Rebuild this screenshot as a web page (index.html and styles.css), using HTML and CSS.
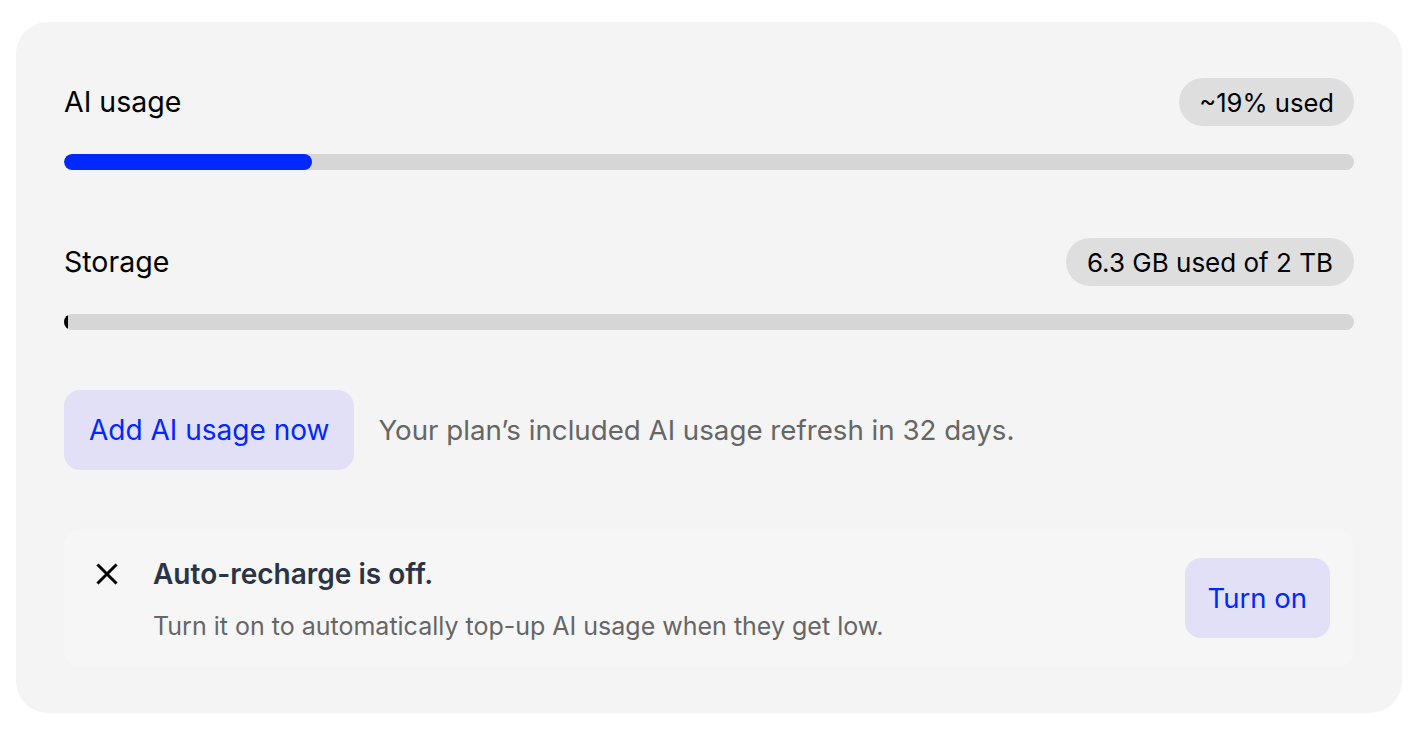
FILE: index.html
```html
<!DOCTYPE html>
<html lang="en">
<head>
<meta charset="utf-8">
<title>Usage</title>
<link rel="stylesheet" href="styles.css">
</head>
<body>
<section class="card">
  <div class="meter">
    <div class="meter-head">
      <span class="meter-label">AI usage</span>
      <span class="pill pill-tight">~19% used</span>
    </div>
    <div class="track"><div class="fill fill-blue" style="width:19.2%"></div></div>
  </div>
  <div class="meter">
    <div class="meter-head">
      <span class="meter-label">Storage</span>
      <span class="pill">6.3 GB used of 2 TB</span>
    </div>
    <div class="track"><div class="fill fill-black" style="width:0.3%"></div></div>
  </div>
  <div class="actions">
    <button class="btn">Add AI usage now</button>
    <span class="note">Your plan’s included AI usage refresh in 32 days.</span>
  </div>
  <div class="recharge">
    <svg class="x-icon" viewBox="0 0 24 24" width="24" height="24" aria-hidden="true">
      <path d="M3.5 3.5 L20.5 20.5 M20.5 3.5 L3.5 20.5" stroke="#000" stroke-width="3" stroke-linecap="square" fill="none"/>
    </svg>
    <div class="recharge-text">
      <div class="recharge-title">Auto-recharge is off.</div>
      <div class="recharge-desc">Turn it on to automatically top-up AI usage when they get low.</div>
    </div>
    <button class="btn btn-small">Turn on</button>
  </div>
</section>
</body>
</html>
```

FILE: styles.css
```css
* { box-sizing: border-box; }

html, body {
  margin: 0;
  background: #ffffff;
}

body {
  padding: 22px 16px;
  font-family: "Inter", "Noto Sans", sans-serif;
  font-size: 26px;
  color: #000;
}

.card {
  background: #f4f4f4;
  border-radius: 32px;
  padding: 56px 48px 47px;
  display: flex;
  flex-direction: column;
}

.meter {
  display: flex;
  flex-direction: column;
  gap: 28px;
}

.meter + .meter {
  margin-top: 68px;
}

.meter-head {
  display: flex;
  align-items: center;
  justify-content: space-between;
  height: 48px;
}

.meter-label {
  font-size: 28.5px;
  line-height: 36px;
}

.pill {
  background: #dedede;
  border-radius: 24px;
  height: 48px;
  padding: 0 21px;
  display: flex;
  align-items: center;
  font-size: 26px;
}

.pill-tight {
  font-size: 25.6px;
  padding: 0 20px;
}

.track {
  height: 16px;
  background: #d6d6d6;
  border-radius: 8px;
  overflow: hidden;
}

.fill {
  height: 100%;
  border-radius: 8px;
}

.fill-blue { background: #0028ff; }
.fill-black { background: #000; min-width: 3px; }

.actions {
  margin-top: 60px;
  display: flex;
  align-items: center;
  gap: 24px;
}

.btn {
  font-family: inherit;
  font-size: 28px;
  color: #0028ff;
  background: #e2e0f7;
  border: none;
  border-radius: 16px;
  height: 80px;
  padding: 0 25px;
  cursor: pointer;
}

.btn-small {
  font-size: 27.5px;
  padding: 0 23px;
}

.note {
  color: #666666;
  font-size: 27.7px;
}

.recharge {
  margin-top: 60px;
  background: #f6f6f6;
  border-radius: 16px;
  padding: 24px 24px 24px 31px;
  display: flex;
  align-items: center;
  gap: 34px;
}

.x-icon {
  flex: none;
  align-self: flex-start;
  margin-top: 8px;
}

.recharge-text {
  flex: 1;
  display: flex;
  flex-direction: column;
  gap: 16px;
}

.recharge-title {
  font-size: 28px;
  font-weight: 600;
  color: #2b3445;
  line-height: 40px;
}

.recharge-desc {
  font-size: 25px;
  color: #666666;
  line-height: 32px;
}
```
